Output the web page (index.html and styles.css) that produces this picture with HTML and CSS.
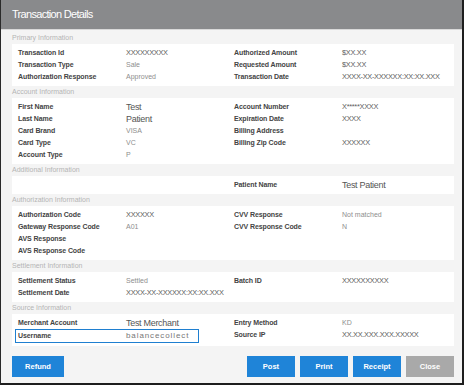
FILE: index.html
```html
<!DOCTYPE html>
<html>
    <head>
        <meta charset="utf-8" />
        <title>Transaction Details</title>
        <link rel="stylesheet" href="styles.css">
    </head>
    <body>
        <div class="modal">
            <div class="modal_header">Transaction Details</div>
            <div class="modal_body">
                <h5 class="section_title">Primary Information</h5>
                <div class="section_box">
                    <div class="col">
                        <div class="row"><span class="lbl">Transaction Id</span><span class="val mask">XXXXXXXXX</span></div>
                        <div class="row"><span class="lbl">Transaction Type</span><span class="val plain">Sale</span></div>
                        <div class="row"><span class="lbl">Authorization Response</span><span class="val plain">Approved</span></div>
                    </div>
                    <div class="col">
                        <div class="row"><span class="lbl">Authorized Amount</span><span class="val mask">$XX.XX</span></div>
                        <div class="row"><span class="lbl">Requested Amount</span><span class="val mask">$XX.XX</span></div>
                        <div class="row"><span class="lbl">Transaction Date</span><span class="val mask">XXXX-XX-XXXXXX:XX:XX.XXX</span></div>
                    </div>
                </div>

                <h5 class="section_title">Account Information</h5>
                <div class="section_box">
                    <div class="col">
                        <div class="row"><span class="lbl">First Name</span><span class="val name">Test</span></div>
                        <div class="row"><span class="lbl">Last Name</span><span class="val name">Patient</span></div>
                        <div class="row"><span class="lbl">Card Brand</span><span class="val plain">VISA</span></div>
                        <div class="row"><span class="lbl">Card Type</span><span class="val plain">VC</span></div>
                        <div class="row"><span class="lbl">Account Type</span><span class="val plain">P</span></div>
                    </div>
                    <div class="col">
                        <div class="row"><span class="lbl">Account Number</span><span class="val mask">X*****XXXX</span></div>
                        <div class="row"><span class="lbl">Expiration Date</span><span class="val mask">XXXX</span></div>
                        <div class="row"><span class="lbl">Billing Address</span><span class="val"></span></div>
                        <div class="row"><span class="lbl">Billing Zip Code</span><span class="val mask">XXXXXX</span></div>
                    </div>
                </div>

                <h5 class="section_title">Additional Information</h5>
                <div class="section_box">
                    <div class="col"></div>
                    <div class="col">
                        <div class="row"><span class="lbl">Patient Name</span><span class="val name">Test Patient</span></div>
                    </div>
                </div>

                <h5 class="section_title">Authorization Information</h5>
                <div class="section_box">
                    <div class="col">
                        <div class="row"><span class="lbl">Authorization Code</span><span class="val mask">XXXXXX</span></div>
                        <div class="row"><span class="lbl">Gateway Response Code</span><span class="val plain">A01</span></div>
                        <div class="row"><span class="lbl">AVS Response</span><span class="val"></span></div>
                        <div class="row"><span class="lbl">AVS Response Code</span><span class="val"></span></div>
                    </div>
                    <div class="col">
                        <div class="row"><span class="lbl">CVV Response</span><span class="val plain">Not matched</span></div>
                        <div class="row"><span class="lbl">CVV Response Code</span><span class="val plain">N</span></div>
                    </div>
                </div>

                <h5 class="section_title">Settlement Information</h5>
                <div class="section_box">
                    <div class="col">
                        <div class="row"><span class="lbl">Settlement Status</span><span class="val plain">Settled</span></div>
                        <div class="row"><span class="lbl">Settlement Date</span><span class="val mask">XXXX-XX-XXXXXX:XX:XX.XXX</span></div>
                    </div>
                    <div class="col">
                        <div class="row"><span class="lbl">Batch ID</span><span class="val mask">XXXXXXXXXX</span></div>
                    </div>
                </div>

                <h5 class="section_title">Source Information</h5>
                <div class="section_box">
                    <div class="col">
                        <div class="row"><span class="lbl">Merchant Account</span><span class="val name">Test Merchant</span></div>
                        <div class="row focused"><span class="lbl">Username</span><span class="val user">balancecollect</span></div>
                    </div>
                    <div class="col">
                        <div class="row"><span class="lbl">Entry Method</span><span class="val plain">KD</span></div>
                        <div class="row"><span class="lbl">Source IP</span><span class="val mask">XX.XX.XXX.XXX.XXXXX</span></div>
                    </div>
                </div>

                <div class="actions">
                    <button type="button" class="btn refund_btn">Refund</button>
                    <div class="actions_right">
                        <button type="button" class="btn">Post</button>
                        <button type="button" class="btn">Print</button>
                        <button type="button" class="btn">Receipt</button>
                        <button type="button" class="btn btn_close">Close</button>
                    </div>
                </div>
            </div>
        </div>
    </body>
</html>
```

FILE: styles.css
```css
* {
	padding: 0;
	margin: 0;
	box-sizing: border-box;
}
body {
	font-family: "Liberation Sans", Arial, sans-serif;
	background: #f4f4f4;
}
.modal {
	width: 464px;
	height: 385px;
	background: #f4f4f4;
	border-left: 1px solid #2a2a2a;
	border-right: 2px solid #1e1e1e;
	border-bottom: 2px solid #1e1e1e;
	overflow: hidden;
}
.modal_header {
	height: 30px;
	line-height: 28px;
	padding-left: 11px;
	background: #898a8c;
	border-bottom: 1px solid #d9d9d9;
	color: #fff;
	font-size: 11px;
	letter-spacing: -0.7px;
}
.modal_body {
	padding: 2px 8px 0 11px;
}
.section_title {
	height: 11.5px;
	line-height: 11px;
	font-size: 7px;
	font-weight: normal;
	color: #b4b4b4;
}
.section_box {
	background: #fff;
	padding: 3px 0 3.5px 6px;
	display: flex;
}
.col {
	width: 216px;
}
.row {
	display: flex;
	height: 12px;
	line-height: 12px;
	white-space: nowrap;
}
.lbl {
	width: 108px;
	font-size: 7px;
	font-weight: bold;
	color: #444;
	letter-spacing: -0.1px;
}
.val {
	font-size: 7px;
}
.plain {
	color: #8e8e8e;
}
.mask {
	color: #606060;
	font-size: 7.4px;
	letter-spacing: -0.3px;
}
.name {
	font-size: 9px;
	color: #555;
	letter-spacing: -0.3px;
}
.user {
	font-size: 8px;
	color: #777;
	letter-spacing: 0.9px;
}
.focused {
	width: 184px;
	margin-left: -3px;
	padding-left: 2px;
	height: 14px;
	line-height: 12px;
	border: 1px solid #1f7fd0;
}
.actions {
	display: flex;
	justify-content: space-between;
	margin-top: 10px;
}
.actions_right {
	display: flex;
	gap: 5px;
}
.btn {
	width: 48px;
	height: 21px;
	border: none;
	background: #1f84d8;
	color: #fff;
	font-family: "Liberation Sans", Arial, sans-serif;
	font-size: 7.5px;
	font-weight: bold;
}
.refund_btn {
	width: 52px;
}
.btn_close {
	background: #a9a9a9;
}
```
